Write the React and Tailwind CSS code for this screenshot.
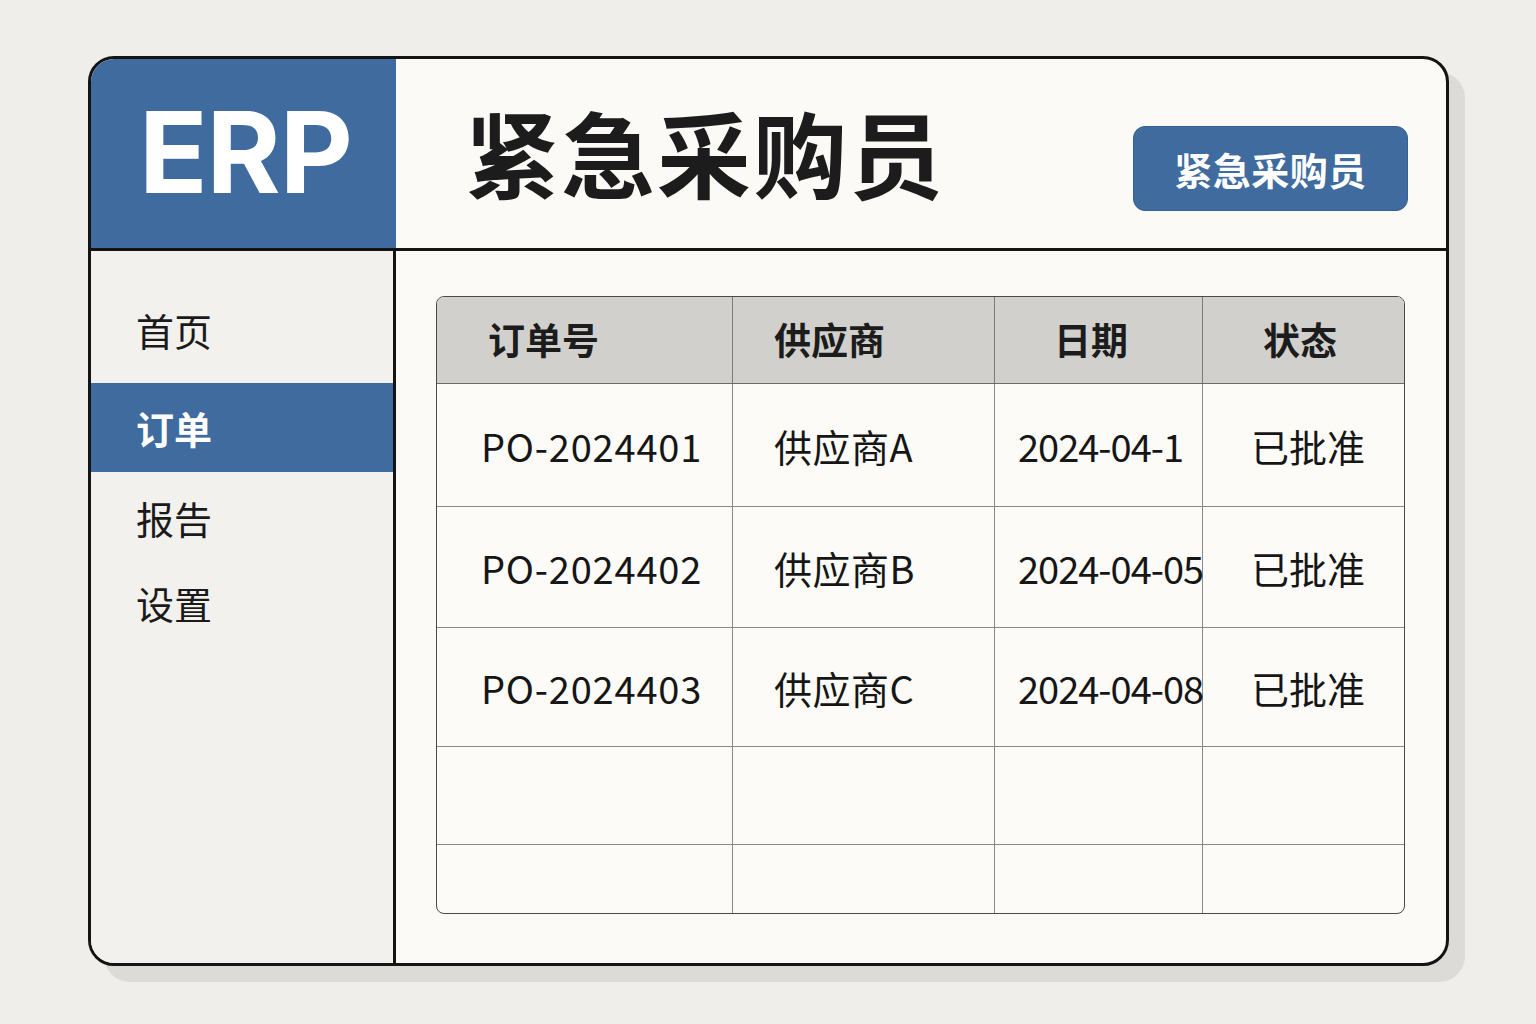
import React from 'react';

const cjk = { fontFamily: '"Noto Sans CJK SC", "Noto Sans", sans-serif' };

const navItems = [
  { label: '首页', cls: 'mt-[39px] mb-[13px] h-[80px]' },
  { label: '订单', cls: 'h-[89px] bg-[#3f6b9f] text-white font-bold', active: true },
  { label: '报告', cls: 'h-[92px]' },
  { label: '设置', cls: 'h-[78px]' },
];

const headers = [
  { text: '订单号', pad: 'pl-[51px]' },
  { text: '供应商', pad: 'pl-[41px]' },
  { text: '日期', pad: 'pl-[59px]' },
  { text: '状态', pad: 'pl-[60px]' },
];

const bodyCols = [
  'pl-[44px] tracking-[0.8px]',
  'pl-[41px] tracking-[0.5px]',
  'pl-[23px] tracking-[-1px]',
  'pl-[48px]',
];

const rows = [
  { h: 'h-[123px]', cells: ['PO-2024401', '供应商A', '2024-04-1', '已批准'] },
  { h: 'h-[121px]', cells: ['PO-2024402', '供应商B', '2024-04-05', '已批准'] },
  { h: 'h-[119px]', cells: ['PO-2024403', '供应商C', '2024-04-08', '已批准'] },
  { h: 'h-[98px]', cells: ['', '', '', ''] },
  { h: 'h-[70px]', cells: ['', '', '', ''], last: true },
];

const App = () => {
  return (
    <div className="w-[1536px] h-[1024px] bg-[#f0eeea] pt-[56px] pl-[88px]" style={cjk}>
      <div className="w-[1361px] h-[910px] flex flex-col bg-[#fbfaf7] border-[3px] border-[#141414] rounded-[26px] overflow-hidden shadow-[16px_16px_0_#dddbd7]">
        {/* header */}
        <div className="h-[192px] flex border-b-[3px] border-[#141414] shrink-0">
          <div className="w-[305px] h-full bg-[#3f6b9f] flex items-center justify-center">
            <span className="text-white text-[113px] font-bold leading-none tracking-[-1px] mt-[-2px] ml-[4px]" style={{ fontFamily: 'Inter, "Noto Sans", sans-serif' }}>
              ERP
            </span>
          </div>
          <div className="flex-1 flex items-center pl-[69px]">
            <h1 className="text-[94px] font-bold text-[#1c1c1c] leading-none tracking-[2px] mb-[6px]">紧急采购员</h1>
          </div>
          <div className="pt-[67px] pr-[38px]">
            <button className="w-[275px] h-[85px] rounded-[12px] bg-[#3f6b9f] text-white text-[38px] font-bold leading-none border border-[#35608f] tracking-[0.5px]">
              紧急采购员
            </button>
          </div>
        </div>

        {/* body */}
        <div className="flex-1 flex min-h-0">
          <aside className="w-[305px] bg-[#f2f1ed] border-r-[3px] border-[#141414] flex flex-col">
            {navItems.map((item) => (
              <div
                key={item.label}
                className={`flex items-center pl-[45px] text-[38px] leading-none ${item.active ? '' : 'text-[#1a1a1a]'} ${item.cls}`}
              >
                {item.label}
              </div>
            ))}
          </aside>

          <main className="flex-1 pt-[45px] pl-[40px]">
            <div className="w-[969px] h-[618px] border-[1.5px] border-[#4a4a4a] rounded-[8px] overflow-hidden bg-[#fcfbf8]">
              <div className="grid grid-cols-[296px_262px_208px_1fr] h-[87px] bg-[#d1d0cc] border-b-[1.5px] border-[#6b6b6b]">
                {headers.map((h, i) => (
                  <div
                    key={h.text}
                    className={`flex items-center ${h.pad} text-[37px] font-bold text-[#1c1c1c] ${i < 3 ? 'border-r border-[#7a7a7a]' : ''}`}
                  >
                    {h.text}
                  </div>
                ))}
              </div>
              {rows.map((row, ri) => (
                <div
                  key={ri}
                  className={`grid grid-cols-[296px_262px_208px_1fr] ${row.h} ${row.last ? '' : 'border-b border-[#8a8a8a]'}`}
                >
                  {row.cells.map((c, ci) => (
                    <div
                      key={ci}
                      className={`flex items-center ${bodyCols[ci]} text-[38px] text-[#161616] whitespace-nowrap ${ci < 3 ? 'border-r border-[#8a8a8a]' : ''}`}
                    >
                      {c}
                    </div>
                  ))}
                </div>
              ))}
            </div>
          </main>
        </div>
      </div>
    </div>
  );
};

export default App;
